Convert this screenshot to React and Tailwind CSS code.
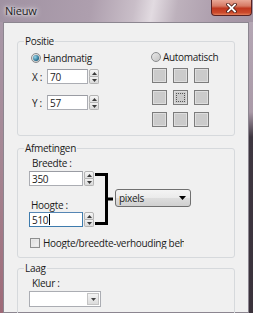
function Spinner() {
  return (
    <div className="flex flex-col w-[10px] h-full ml-px">
      <div className="flex-1 flex items-center justify-center border border-[#b4b4b4] rounded-t-[2px] bg-gradient-to-b from-[#f6f6f6] to-[#e0e0e0]">
        <svg width="5" height="3" viewBox="0 0 5 3"><path d="M0 3h5L2.5 0z" fill="#3a3a3a" /></svg>
      </div>
      <div className="flex-1 flex items-center justify-center border border-t-0 border-[#b4b4b4] rounded-b-[2px] bg-gradient-to-b from-[#f0f0f0] to-[#dadada]">
        <svg width="5" height="3" viewBox="0 0 5 3"><path d="M0 0h5L2.5 3z" fill="#3a3a3a" /></svg>
      </div>
    </div>
  );
}

function NumField({ value, width, focus, caret }) {
  return (
    <div className="flex h-[15px]">
      <div
        className={
          "h-full bg-white border flex items-center pl-[2px] leading-none " +
          (focus ? "border-[#3d7bad] border-t-[#5586b4]" : "border-[#abadb3] border-t-[#9a9ca3]")
        }
        style={{ width }}
      >
        {value}
        {caret && <span className="inline-block w-px h-[11px] bg-black ml-px" />}
      </div>
      <Spinner />
    </div>
  );
}

function Radio({ checked }) {
  return (
    <span className="w-[10px] h-[10px] rounded-full border border-[#8a8c8e] bg-gradient-to-br from-[#e8e8e8] to-[#c4c4c4] flex items-center justify-center shrink-0">
      {checked && <span className="w-[6px] h-[6px] rounded-full bg-[radial-gradient(circle_at_35%_35%,#9ad6ea,#1f6a8c_70%)]" />}
    </span>
  );
}

function Group({ title, className, children }) {
  return (
    <fieldset className={"border border-[#d6d9dc] rounded-[3px] " + className}>
      <legend className="ml-[6px] px-[1px] leading-[13px]">{title}</legend>
      {children}
    </fieldset>
  );
}

function Square({ active }) {
  return (
    <div className="w-[15px] h-[15px] border border-[#7c7c7c] bg-[#cbcbcb] shadow-[inset_0_0_0_1px_#dedede] flex items-center justify-center">
      {active && <div className="w-[9px] h-[9px] border border-dotted border-[#555]" />}
    </div>
  );
}

export default function App() {
  const squares = [0, 1, 2, 3, 4, 5, 6, 7, 8];
  return (
    <div className="w-[253px] h-[313px] overflow-hidden flex flex-col font-['Open_Sans',sans-serif] text-[#1b1b1b] bg-[linear-gradient(100deg,#a092a2_0%,#ae9fae_30%,#c9bec8_44%,#e2dbe1_50%,#bdb1bc_58%,#a898a8_75%,#9a8e9c_100%)]">
      <div className="h-[22px] flex justify-between items-start shrink-0">
        <div className="pl-[5px] pt-[4px] text-[11px] leading-[14px] tracking-[-0.2px] [text-shadow:0_0_6px_#fff,0_0_3px_#fff]">Nieuw</div>
        <div className="w-[41px] h-[16px] mr-px rounded-b-[4px] border border-t-0 border-[#5a2222] bg-[linear-gradient(to_bottom,#e9a896_0%,#d67a64_40%,#c0381f_55%,#cc4a2c_85%,#e4805c_100%)] flex items-center justify-center">
          <svg width="11" height="10" viewBox="0 0 11 10">
            <path d="M2 1.5l7 7M9 1.5l-7 7" stroke="#4a1a12" strokeWidth="3.4" strokeLinecap="square" />
            <path d="M2 1.5l7 7M9 1.5l-7 7" stroke="#ffffff" strokeWidth="1.8" strokeLinecap="square" />
          </svg>
        </div>
      </div>
      <div className="flex flex-1 min-h-0">
        <div className="w-[3px] bg-gradient-to-b from-[#a898a8] via-[#a58592] to-[#9e6a78]" />
        <div className="flex-1 border border-[#8c8690] bg-[#f0f0f0] pl-[13px] pr-[13px] pt-[12px] text-[10px] leading-[12px] tracking-[-0.3px]">
          <Group title="Positie" className="h-[101px]">
            <div className="flex pl-[13px] pt-[4px]">
              <div className="w-[120px]">
                <div className="flex items-center gap-[2px] h-[12px]">
                  <Radio checked />
                  <span>Handmatig</span>
                </div>
                <div className="flex items-center mt-[5px]">
                  <span className="w-[16px] pl-px">X :</span>
                  <NumField value="70" width={41} />
                </div>
                <div className="flex items-center mt-[11px]">
                  <span className="w-[16px] pl-px">Y :</span>
                  <NumField value="57" width={41} />
                </div>
              </div>
              <div>
                <div className="flex items-center gap-[2px] h-[12px] -mt-px">
                  <Radio />
                  <span>Automatisch</span>
                </div>
                <div className="grid grid-cols-[15px_15px_15px] gap-x-[6px] gap-y-[7px] mt-[5px] ml-px">
                  {squares.map((i) => (
                    <Square key={i} active={i === 4} />
                  ))}
                </div>
              </div>
            </div>
          </Group>
          <Group title="Afmetingen" className="h-[116px] mt-[6px]">
            <div className="pl-[11px] pt-[2px]">
              <div className="flex items-start">
                <div className="w-[66px]">
                  <div className="pl-[3px]">Breedte :</div>
                  <div className="mt-[2px]">
                    <NumField value="350" width={54} />
                  </div>
                  <div className="pl-[2px] mt-[13px]">Hoogte :</div>
                  <div className="mt-[1px]">
                    <NumField value="510" width={54} focus caret />
                  </div>
                </div>
                <svg width="18" height="52" viewBox="0 0 18 52" className="mt-[16px] shrink-0">
                  <path d="M0 1.5h11.5V50.5H0M11.5 26H18" fill="none" stroke="#000" strokeWidth="3" />
                </svg>
                <div className="mt-[32px] ml-[2px] w-[76px] h-[18px] border border-[#707070] rounded-[3px] bg-[linear-gradient(to_bottom,#f4f4f4_0%,#ebebeb_48%,#dddddd_52%,#d0d0d0_100%)] flex items-center justify-between pl-[3px] pr-[4px]">
                  <span>pixels</span>
                  <svg width="7" height="4" viewBox="0 0 7 4"><path d="M0 0h7L3.5 4z" fill="#000" /></svg>
                </div>
              </div>
              <div className="flex items-center gap-[3px] mt-[10px] ml-px">
                <span className="w-[10px] h-[10px] border border-[#8e8f8f] bg-gradient-to-br from-[#dcdcdc] to-[#f4f4f4] shadow-[inset_0_0_0_1px_#e8e8e8] shrink-0" />
                <span className="w-[141px] overflow-hidden whitespace-nowrap">Hoogte/breedte-verhouding behouden</span>
              </div>
            </div>
          </Group>
          <Group title="Laag" className="h-[80px] mt-[4px]">
            <div className="pl-[11px] pt-[2px]">
              <div className="pl-[3px]">Kleur :</div>
              <div className="mt-[2px] w-[72px] h-[16px] border border-[#abadb3] bg-white flex p-px">
                <div className="flex-1" />
                <div className="w-[12px] border border-[#c4c4c4] bg-gradient-to-b from-[#f4f4f4] to-[#dcdcdc] flex items-center justify-center">
                  <svg width="5" height="3" viewBox="0 0 5 3"><path d="M0 0h5L2.5 3z" fill="#444" /></svg>
                </div>
              </div>
            </div>
          </Group>
        </div>
        <div className="w-[4px] bg-[linear-gradient(to_bottom,#b4a6b4_0px,#aa9aa8_90px,#3e3640_115px,#3a323b_100%)]" />
      </div>
    </div>
  );
}
